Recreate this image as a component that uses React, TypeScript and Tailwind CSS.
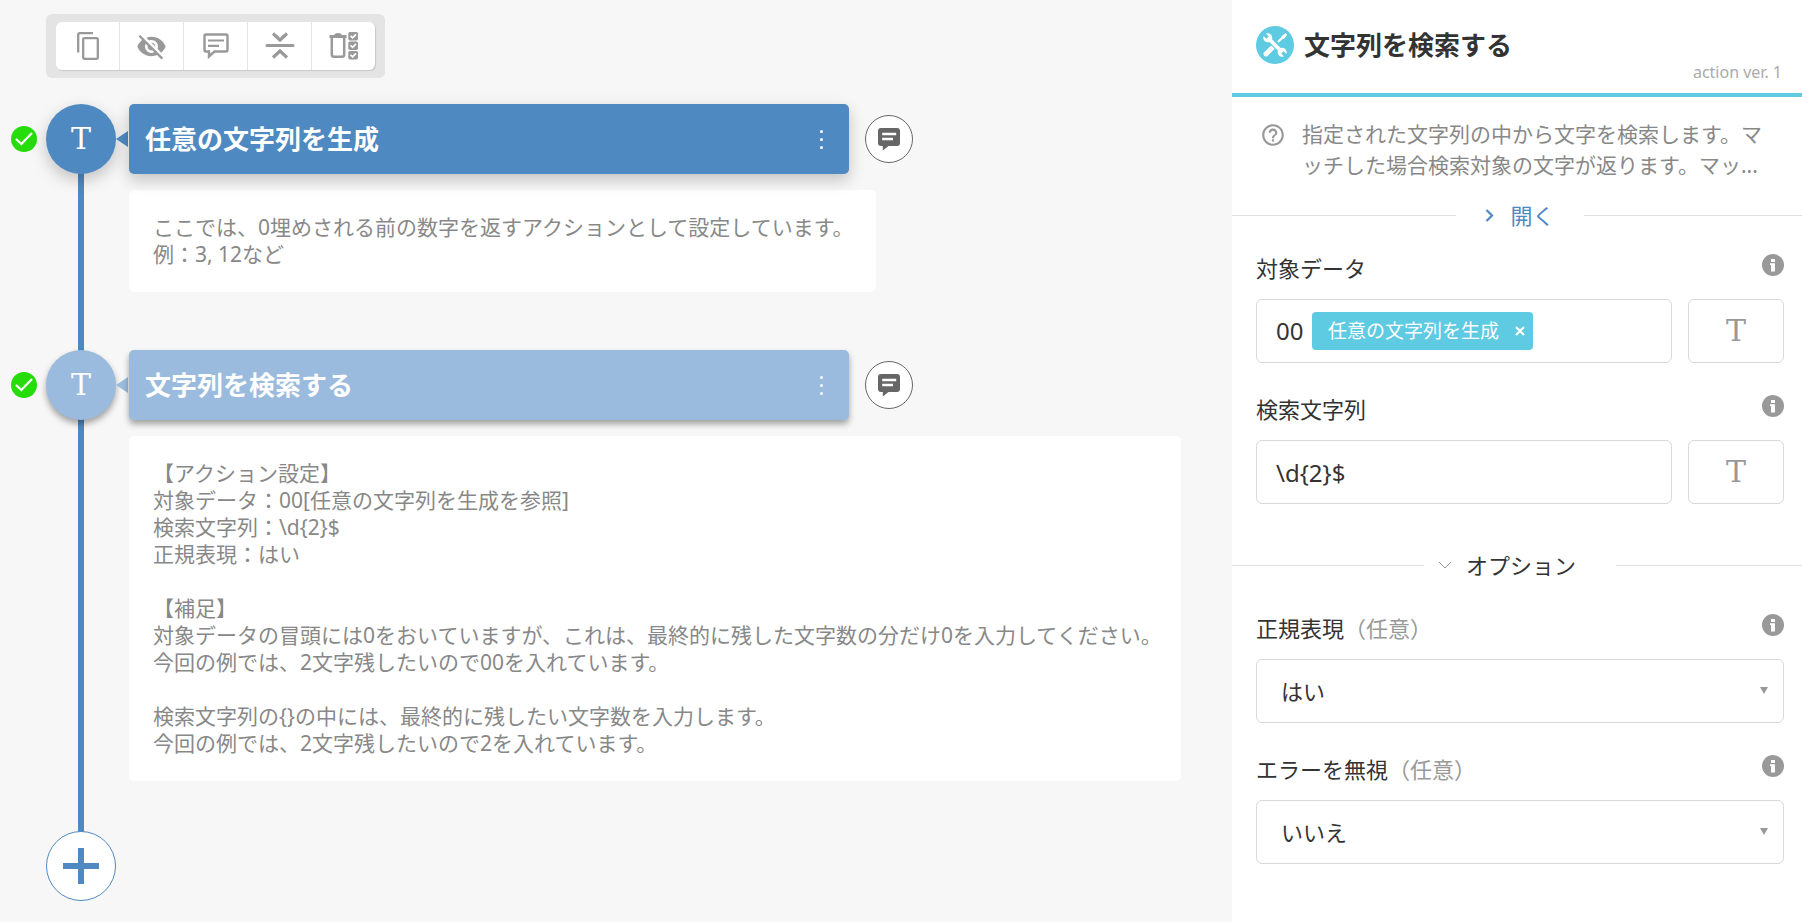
import { useId, useState } from "react";
import type { ReactNode } from "react";
import { MdHelpOutline, MdVisibilityOff } from "react-icons/md";

function CopyIcon() {
  return (
    <svg width="22" height="28" viewBox="0 0 22 28" fill="none" stroke="currentColor" strokeWidth="2.300">
      <path d="M1.200 20.500V2.700Q1.200 1.200 2.700 1.200H16" />
      <rect x="6.200" y="6.200" width="14.600" height="20.600" rx="1" />
    </svg>
  );
}

function CommentOutlineIcon() {
  return (
    <svg width="26" height="26" viewBox="0 0 26 26" fill="none" stroke="currentColor" strokeWidth="2.400">
      <path d="M3 1.500H23Q24.500 1.500 24.500 3V17Q24.500 18.500 23 18.500H11.500L6 23.500V18.500H3Q1.500 18.500 1.500 17V3Q1.500 1.500 3 1.500Z" />
      <path d="M5 7.500H21M5 12.800H16" strokeWidth="2.200" />
    </svg>
  );
}

function CollapseIcon() {
  return (
    <svg width="30" height="28" viewBox="0 0 30 28" fill="none" stroke="currentColor" strokeWidth="3.200">
      <path d="M2 13.500H28" strokeLinecap="round" strokeWidth="3" />
      <path d="M8 1.500L15 8L22 1.500M8 25.500L15 19L22 25.500" />
    </svg>
  );
}

function BulkDeleteIcon() {
  return (
    <svg width="30" height="28" viewBox="0 0 30 28" fill="none" stroke="currentColor">
      <path d="M0.500 4.500H17.500" strokeWidth="3" />
      <path d="M5 4Q5 1 9 1Q13 1 13 4Z" fill="currentColor" stroke="none" />
      <path d="M2.800 6V22.500Q2.800 24.800 5 24.800H13Q15.200 24.800 15.200 22.500V6" strokeWidth="2.500" />
      {[0, 9.5, 19].map((y) => (
        <g key={y}>
          <rect x="19.300" y={y} width="9.700" height="8.400" rx="1.600" fill="currentColor" stroke="none" />
          <path d={`M21.600 ${y + 3.8}L23.600 ${y + 5.8}L27 ${y + 2.4}`} stroke="white" strokeWidth="1.700" />
        </g>
      ))}
    </svg>
  );
}

function CommentSolidIcon() {
  return (
    <svg width="24" height="24" viewBox="0 0 24 24">
      <path d="M4 1H20Q23 1 23 4V16Q23 19 20 19H11.500L5.800 23.500V19H4Q1 19 1 16V4Q1 1 4 1Z" fill="currentColor" />
      <path d="M5.200 7H19.200M5.200 12H16" stroke="white" strokeWidth="2.400" />
    </svg>
  );
}

function ToolsIcon() {
  return (
    <svg width="24" height="24" viewBox="0 0 24 24" fill="none">
      <path d="M15 9L21.500 2.500" stroke="white" strokeWidth="2.200" />
      <path d="M19 3.500L22.500 0.500L23.800 1.500L20.500 6Z" fill="white" stroke="white" strokeWidth="1" strokeLinejoin="round" />
      <path d="M10 14L3 21" stroke="white" strokeWidth="4.800" strokeLinecap="round" />
      <path d="M5 5L19 19" stroke="#5ecbe3" strokeWidth="6" />
      <path d="M5 5L19 19" stroke="white" strokeWidth="3.800" />
      <circle cx="4.800" cy="4.800" r="4.500" fill="white" />
      <circle cx="19.200" cy="19.200" r="4.500" fill="white" />
      <path d="M4.600 4.600L0 0M19.400 19.400L24 24" stroke="#5ecbe3" strokeWidth="3.400" />
    </svg>
  );
}

function InfoIcon() {
  return (
    <svg width="22" height="22" viewBox="0 0 22 22">
      <circle cx="11" cy="11" r="11" fill="currentColor" />
      <path d="M9 5H13V8H9ZM8 9.300H13V17.500H9V11H8Z" fill="white" />
    </svg>
  );
}

function CheckBadge() {
  return (
    <svg className="size-[26px] shrink-0" viewBox="0 0 26 26" role="img" aria-label="OK">
      <circle cx="13" cy="13" r="13" fill="#26dc0a" />
      <path d="M5 13L10.300 18L21 7" fill="none" stroke="white" strokeWidth="2.300" />
    </svg>
  );
}

const tools: { label: string; icon: ReactNode }[] = [
  { label: "コピー", icon: <CopyIcon /> },
  { label: "非表示", icon: <MdVisibilityOff size={31} /> },
  { label: "コメント", icon: <CommentOutlineIcon /> },
  { label: "折りたたむ", icon: <CollapseIcon /> },
  { label: "まとめて削除", icon: <BulkDeleteIcon /> },
];

function Toolbar() {
  return (
    <div className="ml-[46px] w-[339px] rounded-md bg-[#e4e4e4] px-[10px] py-2">
      <div className="flex h-12 divide-x divide-[#e4e4e4] overflow-hidden rounded-md bg-white shadow-[1px_1px_1px_#c8c8c8]">
        {tools.map((tool) => (
          <button key={tool.label} type="button" aria-label={tool.label} className="flex flex-1 items-center justify-center text-[#999]">
            {tool.icon}
          </button>
        ))}
      </div>
    </div>
  );
}

function Step({ title, note, selected, wide }: { title: string; note: string; selected?: boolean; wide?: boolean }) {
  const color = selected ? "bg-[#9bbbde]" : "bg-[#4f89c1]";
  const shadow = selected ? "shadow-[0_4px_6px_rgba(0,0,0,0.35)]" : "shadow-[0_6px_16px_rgba(0,0,0,0.22)]";
  return (
    <section>
      <div className="flex items-center">
        <div className="flex w-[46px] pl-[11px]">
          <CheckBadge />
        </div>
        <div className={`flex size-[70px] shrink-0 items-center justify-center rounded-full text-white ${color} ${shadow}`}>
          <span className="font-['DejaVu_Serif',serif] text-[30px] leading-none">T</span>
        </div>
        <svg className={`h-4 w-[13px] shrink-0 ${selected ? "text-[#9bbbde]" : "text-[#4f89c1]"}`} viewBox="0 0 13 16">
          <path d="M0 8L12 0V16Z" fill="currentColor" />
        </svg>
        <div className={`flex h-[70px] w-[720px] items-center justify-between rounded-[5px] px-4 ${color} ${shadow}`}>
          <h2 className="text-[26px] leading-8 font-bold text-white">{title}</h2>
          <button type="button" aria-label="メニュー" className="flex h-10 w-6 flex-col items-center justify-center gap-[5px]">
            <span className="size-[3px] rounded-full bg-white" />
            <span className="size-[3px] rounded-full bg-white" />
            <span className="size-[3px] rounded-full bg-white" />
          </button>
        </div>
        <button type="button" aria-label="コメントを表示" className="ml-4 flex size-12 items-center justify-center rounded-full border border-[#666] bg-white text-[#666]">
          <CommentSolidIcon />
        </button>
      </div>
      <p className={`mt-4 ml-[129px] rounded-[5px] bg-white px-6 py-6 text-[21px] leading-[27px] whitespace-pre text-[#888] ${wide ? "w-[1052px]" : "w-[747px]"}`}>{note}</p>
    </section>
  );
}

function Field({ label, optional, children }: { label: string; optional?: boolean; children: (id: string) => ReactNode }) {
  const id = useId();
  return (
    <div>
      <div className="flex h-8 items-start justify-between">
        <label htmlFor={id} className="text-[22px] leading-8 text-[#333]">
          {label}
          {optional && <span className="text-[#999]">（任意）</span>}
        </label>
        <button type="button" aria-label={`${label}の説明`} className="mt-[2px] text-[#999]">
          <InfoIcon />
        </button>
      </div>
      <div className="mt-[15px] flex gap-4">{children(id)}</div>
    </div>
  );
}

function TypeButton() {
  return (
    <button type="button" aria-label="文字列型" className="h-16 w-24 shrink-0 rounded-md border border-[#d9d9d9] font-['DejaVu_Serif',serif] text-[30px] leading-none text-[#999]">
      T
    </button>
  );
}

function SelectBox({ id, initial }: { id: string; initial: string }) {
  return (
    <div className="relative flex-1">
      <select id={id} defaultValue={initial} className="h-16 w-full appearance-none rounded-md border border-[#d9d9d9] bg-white px-6 text-[22px] text-[#333]">
        <option>はい</option>
        <option>いいえ</option>
      </select>
      <svg className="pointer-events-none absolute top-7 right-4 h-[7px] w-2 text-[#999]" viewBox="0 0 8 7">
        <path d="M0 0H8L4 7Z" fill="currentColor" />
      </svg>
    </div>
  );
}

export default function App() {
  const [target, setTarget] = useState("00");
  const [pattern, setPattern] = useState("\\d{2}$");
  return (
    <div className="flex min-h-screen bg-[#f7f7f7] font-['Noto_Sans','Noto_Sans_CJK_JP',sans-serif]">
      <main className="min-w-0 flex-1 pt-[14px]">
        <Toolbar />
        <div className="relative mt-[26px]">
          <div className="absolute top-9 bottom-9 left-[78px] w-[6px] bg-[#4f89c1]" />
          <div className="relative">
            <Step title="任意の文字列を生成" note={"ここでは、0埋めされる前の数字を返すアクションとして設定しています。\n例：3, 12など"} />
            <div className="h-[58px]" />
            <Step
              selected
              wide
              title="文字列を検索する"
              note={
                "【アクション設定】\n対象データ：00[任意の文字列を生成を参照]\n検索文字列：\\d{2}$\n正規表現：はい\n\n【補足】\n対象データの冒頭には0をおいていますが、これは、最終的に残した文字数の分だけ0を入力してください。\n今回の例では、2文字残したいので00を入れています。\n\n検索文字列の{}の中には、最終的に残したい文字数を入力します。\n今回の例では、2文字残したいので2を入れています。"
              }
            />
            <button type="button" aria-label="追加" className="mt-[50px] ml-[46px] flex size-[70px] items-center justify-center rounded-full border border-[#4f89c1] bg-white text-[#4f89c1]">
              <svg width="36" height="36" viewBox="0 0 36 36" stroke="currentColor" strokeWidth="6">
                <path d="M0 18H36M18 0V36" />
              </svg>
            </button>
          </div>
        </div>
      </main>

      <aside className="w-[570px] shrink-0 bg-white">
        <header className="flex h-[97px] flex-col border-b-4 border-[#5ecbe3] pt-[26px] pr-5 pl-6">
          <div className="flex items-center gap-[10px]">
            <span className="flex size-[38px] items-center justify-center rounded-full bg-[#5ecbe3]">
              <ToolsIcon />
            </span>
            <h1 className="text-[26px] leading-[38px] font-bold text-[#333]">文字列を検索する</h1>
          </div>
          <p className="-mt-1 text-right text-base leading-6 text-[#aaa]">action ver. 1</p>
        </header>

        <div className="flex gap-4 px-7 pt-[22px]">
          <MdHelpOutline size={26} className="mt-[3px] shrink-0 text-[#999]" />
          <p className="line-clamp-2 w-[464px] text-[21px] leading-[31px] text-[#888]">
            指定された文字列の中から文字を検索します。マッチした場合検索対象の文字が返ります。マッ...
          </p>
        </div>

        <div className="mt-[18px] flex h-8 items-center">
          <span className="h-px w-56 bg-[#e0e0e0]" />
          <button type="button" className="flex w-32 items-center justify-center gap-4 text-[22px] leading-8 text-[#4f89c1]">
            <svg width="9" height="13" viewBox="0 0 9 13" fill="none" stroke="currentColor" strokeWidth="2.200">
              <path d="M1.500 1L7 6.500L1.500 12" />
            </svg>
            開く
          </button>
          <span className="h-px flex-1 bg-[#e0e0e0]" />
        </div>

        <div className="flex flex-col gap-[30px] pt-[21px] pr-[18px] pl-6">
          <Field label="対象データ">
            {(id) => (
              <>
                <div className="flex h-16 min-w-0 flex-1 items-center gap-2 rounded-md border border-[#d9d9d9] pl-[19px]">
                  <input id={id} value={target} onChange={(e) => setTarget(e.target.value)} className="w-7 text-2xl text-[#333] outline-none" />
                  <span className="flex h-[38px] items-center gap-4 rounded bg-[#5ecbe3] pr-2 pl-4 text-[19px] whitespace-nowrap text-white">
                    任意の文字列を生成
                    <button type="button" aria-label="削除">
                      <svg width="10" height="10" viewBox="0 0 10 10" stroke="currentColor" strokeWidth="2.200">
                        <path d="M1 1L9 9M9 1L1 9" />
                      </svg>
                    </button>
                  </span>
                </div>
                <TypeButton />
              </>
            )}
          </Field>
          <Field label="検索文字列">
            {(id) => (
              <>
                <input id={id} value={pattern} onChange={(e) => setPattern(e.target.value)} className="h-16 min-w-0 flex-1 rounded-md border border-[#d9d9d9] px-[19px] text-2xl text-[#333]" />
                <TypeButton />
              </>
            )}
          </Field>
        </div>

        <div className="mt-[45px] flex h-8 items-center">
          <span className="h-px w-48 bg-[#e0e0e0]" />
          <button type="button" className="flex w-48 items-center gap-[14px] pl-[14px] text-[22px] leading-8 text-[#333]">
            <svg width="14" height="8" viewBox="0 0 14 8" fill="none" stroke="#999" strokeWidth="1">
              <path d="M1 1L7 7L13 1" />
            </svg>
            オプション
          </button>
          <span className="h-px flex-1 bg-[#e0e0e0]" />
        </div>

        <div className="flex flex-col gap-[30px] pt-[31px] pr-[18px] pl-6">
          <Field label="正規表現" optional>
            {(id) => <SelectBox id={id} initial="はい" />}
          </Field>
          <Field label="エラーを無視" optional>
            {(id) => <SelectBox id={id} initial="いいえ" />}
          </Field>
        </div>
      </aside>
    </div>
  );
}
